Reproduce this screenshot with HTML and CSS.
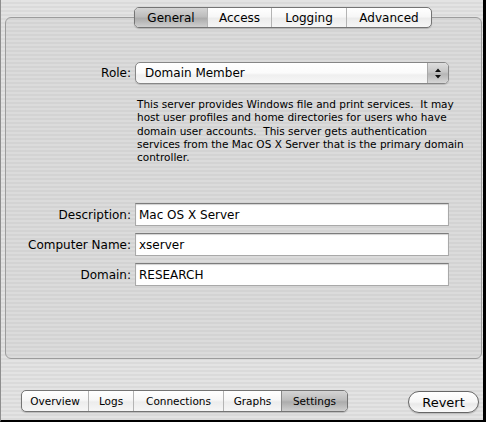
FILE: index.html
```html
<!DOCTYPE html>
<html>
<head>
<meta charset="utf-8">
<link rel="stylesheet" href="styles.css">
</head>
<body>
<div class="window">
  <div class="top-tabs">
    <div class="seg-group top">
      <span class="seg sel w-general">General</span>
      <span class="seg w-access">Access</span>
      <span class="seg w-logging">Logging</span>
      <span class="seg w-advanced">Advanced</span>
    </div>
  </div>
  <div class="groupbox">
    <div class="row role-row">
      <span class="lbl">Role:</span>
      <div class="popup">
        <span class="popup-text">Domain Member</span>
        <span class="popup-btn">
          <svg width="8" height="11" viewBox="0 0 8 11"><path d="M4 0.5 L7 4 L1 4 Z M1 7 L7 7 L4 10.5 Z" fill="#111"/></svg>
        </span>
      </div>
    </div>
    <p class="desc"><span>This server provides Windows file and print services.&nbsp; It may</span><span>host user profiles and home directories for users who have</span><span>domain user accounts.&nbsp; This server gets authentication</span><span>services from the Mac OS X Server that is the primary domain</span><span>controller.</span></p>
    <div class="row field-row first">
      <span class="lbl">Description:</span>
      <div class="field">Mac OS X Server</div>
    </div>
    <div class="row field-row">
      <span class="lbl">Computer Name:</span>
      <div class="field">xserver</div>
    </div>
    <div class="row field-row">
      <span class="lbl">Domain:</span>
      <div class="field">RESEARCH</div>
    </div>
  </div>
  <div class="bottombar">
    <div class="seg-group bottom">
      <span class="seg w-overview">Overview</span>
      <span class="seg w-logs">Logs</span>
      <span class="seg w-connections">Connections</span>
      <span class="seg w-graphs">Graphs</span>
      <span class="seg sel w-settings">Settings</span>
    </div>
    <button class="revert">Revert</button>
  </div>
</div>
</body>
</html>
```
FILE: styles.css
```css
* { box-sizing: border-box; }
html, body { margin: 0; padding: 0; }
body {
  width: 486px;
  height: 422px;
  overflow: hidden;
  font-family: "DejaVu Sans", "Liberation Sans", sans-serif;
  color: #000;
  background: #d8d8d8;
}
.window {
  width: 486px;
  height: 422px;
  border-left: 1px solid #8e8e8e;
  border-right: 3px solid #000;
  border-bottom: 2px solid #000;
  padding-top: 7px;
  background: repeating-linear-gradient(to bottom, #e3e3e3 0px, #e3e3e3 2px, #dadada 2px, #dadada 4px);
}
.top-tabs {
  display: flex;
  padding-left: 133px;
  position: relative;
  z-index: 1;
}
.seg-group {
  display: flex;
  border: 1px solid #747474;
  border-radius: 5px;
  overflow: hidden;
  background: linear-gradient(to bottom, #ffffff 0%, #f7f7f7 45%, #ececec 55%, #f6f6f6 100%);
  box-shadow: 0 1px 1px rgba(0,0,0,0.18);
}
.seg-group.top { height: 21px; font-size: 12px; }
.seg-group.bottom { height: 22px; font-size: 10.5px; }
.seg {
  display: flex;
  align-items: center;
  justify-content: center;
  border-left: 1px solid #b4b4b4;
  white-space: nowrap;
}
.seg:first-child { border-left: none; }
.seg.sel {
  background: linear-gradient(to bottom, #d4d4d4 0%, #bdbdbd 45%, #acacac 55%, #cfcfcf 100%);
  border-left-color: #8a8a8a;
}
.w-general { width: 72px; }
.w-access { width: 64px; }
.w-logging { width: 75px; }
.w-advanced { width: 85px; }
.w-overview { width: 66px; }
.w-logs { width: 45px; }
.w-connections { width: 90px; }
.w-graphs { width: 58px; }
.w-settings { width: 66px; }

.groupbox {
  margin-top: -11px;
  margin-left: 4px;
  width: 477px;
  height: 342px;
  border: 1px solid #9c9c9c;
  border-radius: 6px;
  background: rgba(0,0,0,0.03);
  padding-top: 44px;
}
.row {
  display: flex;
  align-items: center;
  gap: 4px;
}
.lbl {
  width: 125px;
  text-align: right;
  font-size: 12px;
  white-space: nowrap;
}
.popup {
  width: 314px;
  height: 22px;
  border: 1px solid #868686;
  border-radius: 5px;
  display: flex;
  overflow: hidden;
  background: linear-gradient(to bottom, #ffffff 0%, #fbfbfb 50%, #efefef 60%, #f7f7f7 100%);
  box-shadow: 0 1px 1px rgba(0,0,0,0.15);
}
.popup-text {
  flex: 1;
  font-size: 12px;
  padding-left: 9px;
  display: flex;
  align-items: center;
}
.popup-btn {
  width: 21px;
  border-left: 1px solid #a8a8a8;
  background: linear-gradient(to bottom, #dedede 0%, #c6c6c6 45%, #b6b6b6 55%, #d6d6d6 100%);
  display: flex;
  align-items: center;
  justify-content: center;
}
.desc {
  margin: 14px 0 0 131px;
  font-size: 10.5px;
  line-height: 13.25px;
  display: flex;
  flex-direction: column;
}
.desc span { white-space: nowrap; }
.field-row { margin-top: 7px; }
.field-row.first { margin-top: 39px; }
.field {
  width: 314px;
  height: 23px;
  background: #fff;
  border: 1px solid #a9a9a9;
  border-top-color: #7c7c7c;
  box-shadow: inset 0 1px 1px rgba(0,0,0,0.18);
  font-size: 12px;
  padding-left: 3px;
  display: flex;
  align-items: center;
}
.bottombar {
  margin-top: 31px;
  padding-left: 20px;
  padding-right: 4px;
  display: flex;
  justify-content: space-between;
  align-items: flex-start;
}
.revert {
  margin-top: 1px;
  width: 71px;
  height: 22px;
  border: 1px solid #666;
  border-radius: 11px;
  background: linear-gradient(to bottom, #ffffff 0%, #f6f6f6 50%, #e9e9e9 60%, #fafafa 100%);
  box-shadow: 0 1px 1px rgba(0,0,0,0.18);
  font-family: "DejaVu Sans", "Liberation Sans", sans-serif;
  font-size: 13px;
  color: #000;
  padding: 0;
}
```
